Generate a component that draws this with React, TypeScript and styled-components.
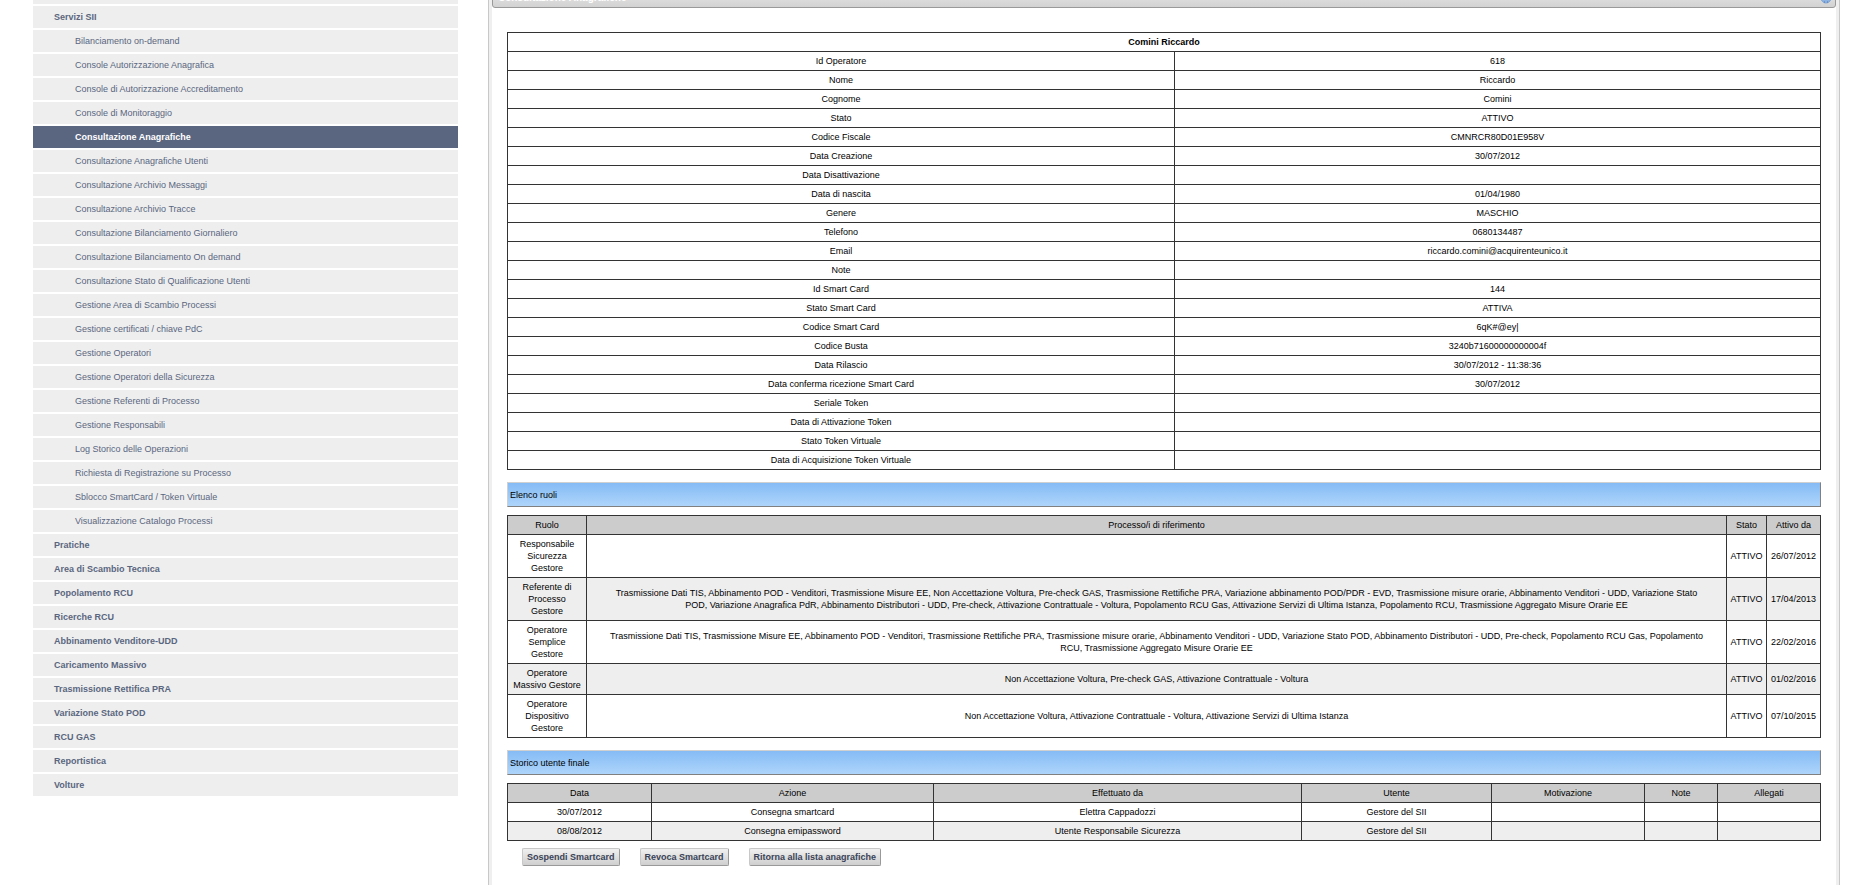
import React from "react";
import styled, { createGlobalStyle } from "styled-components";

const Global = createGlobalStyle`
  * { box-sizing: border-box; }
  body {
    margin: 0;
    background: #fff;
    color: #000;
    font: 9px/12px "Liberation Sans", Arial, sans-serif;
    overflow: hidden;
  }
`;

const Page = styled.div`
  display: flex;
  align-items: stretch;
  gap: 30px;
  min-height: 100vh;
  padding: 0 23px 0 33px;
`;

const Sidebar = styled.nav`
  flex: 0 0 425px;
`;

const Menu = styled.ul`
  display: flex;
  flex-direction: column;
  gap: 2px;
  margin: -18px 0 0;
  padding: 0;
  list-style: none;
`;

const MenuItem = styled.li`
  height: 22px;
  background: #eee;
`;

const MenuLink = styled.a<{ $level: 1 | 2; $active?: boolean }>`
  display: block;
  padding: 5px 0 5px ${(p) => (p.$level === 1 ? 21 : 42)}px;
  color: ${(p) => (p.$active ? "#fff" : "#5a667f")};
  background: ${(p) => (p.$active ? "#5a667f" : "transparent")};
  font-weight: ${(p) => (p.$level === 1 || p.$active ? "bold" : "normal")};
  text-decoration: none;
`;

const Panel = styled.main`
  flex: 1;
  min-width: 0;
  border: solid #c8c8c8;
  border-width: 0 1px;
  background: #efefef;
  padding: 0 3px;
`;

const PanelBody = styled.div`
  display: flow-root;
  min-height: 100vh;
  background: #fff;
`;

const TitleBar = styled.header`
  display: flex;
  align-items: flex-end;
  justify-content: space-between;
  height: 26px;
  margin-top: -18px;
  padding: 0 3px 3px 5px;
  border: 1px solid #999;
  border-radius: 3px;
  background: linear-gradient(#f0f0f0, #d2d2d2);
`;

const Title = styled.h1`
  margin: 0;
  color: #fff;
  font-size: 10px;
  line-height: 12px;
`;

const Content = styled.div`
  padding: 24px 15px 0;
`;

const DataTable = styled.table`
  width: 100%;
  table-layout: fixed;
  border-collapse: collapse;
  text-align: center;
`;

const HeadRow = styled.tr`
  background: #ccc;
`;

const BodyRow = styled.tr<{ $shaded?: boolean }>`
  background: ${(p) => (p.$shaded ? "#eee" : "#fff")};
`;

const Cell = styled.td<{ $inset?: number; $strong?: boolean }>`
  height: 19px;
  padding: 3px ${(p) => p.$inset ?? 3}px;
  border: 1px solid #333;
  font-weight: ${(p) => (p.$strong ? "bold" : "normal")};
`;

const SectionBar = styled.h2`
  margin: 12px 0 8px;
  padding: 6px 2px 5px;
  border: 1px solid;
  border-color: #d0d0d0 #808080 #808080 #d0d0d0;
  background: linear-gradient(#85bbf5, #aed5fb);
  font-size: 9px;
  font-weight: normal;
  line-height: 12px;
`;

const Actions = styled.div`
  display: flex;
  gap: 20px;
  padding: 7px 15px;
`;

const ActionButton = styled.button`
  height: 18px;
  padding: 0 4px;
  border: 1px solid;
  border-color: #c8c8c8 #999 #999 #c8c8c8;
  border-radius: 2px;
  background: linear-gradient(#f0f0f0, #cfcfcf);
  color: #3a4358;
  font: bold 9px/12px "Liberation Sans", Arial, sans-serif;
`;

const services = [
  "Bilanciamento on-demand", "Console Autorizzazione Anagrafica", "Console di Autorizzazione Accreditamento",
  "Console di Monitoraggio", "Consultazione Anagrafiche", "Consultazione Anagrafiche Utenti",
  "Consultazione Archivio Messaggi", "Consultazione Archivio Tracce", "Consultazione Bilanciamento Giornaliero",
  "Consultazione Bilanciamento On demand", "Consultazione Stato di Qualificazione Utenti",
  "Gestione Area di Scambio Processi", "Gestione certificati / chiave PdC", "Gestione Operatori",
  "Gestione Operatori della Sicurezza", "Gestione Referenti di Processo", "Gestione Responsabili",
  "Log Storico delle Operazioni", "Richiesta di Registrazione su Processo", "Sblocco SmartCard / Token Virtuale",
  "Visualizzazione Catalogo Processi",
];

const areas = [
  "Pratiche", "Area di Scambio Tecnica", "Popolamento RCU", "Ricerche RCU", "Abbinamento Venditore-UDD",
  "Caricamento Massivo", "Trasmissione Rettifica PRA", "Variazione Stato POD", "RCU GAS", "Reportistica", "Volture",
];

const details: [string, string][] = [
  ["Id Operatore", "618"], ["Nome", "Riccardo"], ["Cognome", "Comini"], ["Stato", "ATTIVO"],
  ["Codice Fiscale", "CMNRCR80D01E958V"], ["Data Creazione", "30/07/2012"], ["Data Disattivazione", ""],
  ["Data di nascita", "01/04/1980"], ["Genere", "MASCHIO"], ["Telefono", "0680134487"],
  ["Email", "riccardo.comini@acquirenteunico.it"], ["Note", ""], ["Id Smart Card", "144"],
  ["Stato Smart Card", "ATTIVA"], ["Codice Smart Card", "6qK#@ey|"], ["Codice Busta", "3240b71600000000004f"],
  ["Data Rilascio", "30/07/2012 - 11:38:36"], ["Data conferma ricezione Smart Card", "30/07/2012"],
  ["Seriale Token", ""], ["Data di Attivazione Token", ""], ["Stato Token Virtuale", ""],
  ["Data di Acquisizione Token Virtuale", ""],
];

const roles = [
  ["Responsabile Sicurezza Gestore", "", "ATTIVO", "26/07/2012"],
  ["Referente di Processo Gestore", "Trasmissione Dati TIS, Abbinamento POD - Venditori, Trasmissione Misure EE, Non Accettazione Voltura, Pre-check GAS, Trasmissione Rettifiche PRA, Variazione abbinamento POD/PDR - EVD, Trasmissione misure orarie, Abbinamento Venditori - UDD, Variazione Stato POD, Variazione Anagrafica PdR, Abbinamento Distributori - UDD, Pre-check, Attivazione Contrattuale - Voltura, Popolamento RCU Gas, Attivazione Servizi di Ultima Istanza, Popolamento RCU, Trasmissione Aggregato Misure Orarie EE", "ATTIVO", "17/04/2013"],
  ["Operatore Semplice Gestore", "Trasmissione Dati TIS, Trasmissione Misure EE, Abbinamento POD - Venditori, Trasmissione Rettifiche PRA, Trasmissione misure orarie, Abbinamento Venditori - UDD, Variazione Stato POD, Abbinamento Distributori - UDD, Pre-check, Popolamento RCU Gas, Popolamento RCU, Trasmissione Aggregato Misure Orarie EE", "ATTIVO", "22/02/2016"],
  ["Operatore Massivo Gestore", "Non Accettazione Voltura, Pre-check GAS, Attivazione Contrattuale - Voltura", "ATTIVO", "01/02/2016"],
  ["Operatore Dispositivo Gestore", "Non Accettazione Voltura, Attivazione Contrattuale - Voltura, Attivazione Servizi di Ultima Istanza", "ATTIVO", "07/10/2015"],
];

const history = [
  ["30/07/2012", "Consegna smartcard", "Elettra Cappadozzi", "Gestore del SII", "", "", ""],
  ["08/08/2012", "Consegna emipassword", "Utente Responsabile Sicurezza", "Gestore del SII", "", "", ""],
];

type Column = { label: string; width: number; inset?: number };

const roleColumns: Column[] = [
  { label: "Ruolo", width: 79, inset: 4 },
  { label: "Processo/i di riferimento", width: 1140, inset: 20 },
  { label: "Stato", width: 40 },
  { label: "Attivo da", width: 54 },
];

const historyColumns: Column[] = [
  { label: "Data", width: 144 },
  { label: "Azione", width: 282 },
  { label: "Effettuato da", width: 368 },
  { label: "Utente", width: 190 },
  { label: "Motivazione", width: 153 },
  { label: "Note", width: 73 },
  { label: "Allegati", width: 103 },
];

function Grid({ columns, rows }: { columns: Column[]; rows: string[][] }) {
  return (
    <DataTable>
      <colgroup>{columns.map((c) => <col key={c.label} width={c.width} />)}</colgroup>
      <thead>
        <HeadRow>{columns.map((c) => <Cell as="th" key={c.label} scope="col">{c.label}</Cell>)}</HeadRow>
      </thead>
      <tbody>
        {rows.map((row, r) => (
          <BodyRow key={r} $shaded={r % 2 === 1}>
            {row.map((text, c) => <Cell key={c} $inset={columns[c].inset}>{text}</Cell>)}
          </BodyRow>
        ))}
      </tbody>
    </DataTable>
  );
}

export default function App() {
  return (
    <>
      <Global />
      <Page>
        <Sidebar>
          <Menu>
            <MenuItem />
            <MenuItem><MenuLink href="#" $level={1}>Servizi SII</MenuLink></MenuItem>
            {services.map((s) => (
              <MenuItem key={s}>
                <MenuLink href="#" $level={2} $active={s === "Consultazione Anagrafiche"}>{s}</MenuLink>
              </MenuItem>
            ))}
            {areas.map((a) => (
              <MenuItem key={a}><MenuLink href="#" $level={1}>{a}</MenuLink></MenuItem>
            ))}
          </Menu>
        </Sidebar>
        <Panel>
          <PanelBody>
            <TitleBar>
              <Title>Consultazione Anagrafiche</Title>
              <svg width="12" height="12" viewBox="0 0 12 12" aria-hidden="true">
                <circle cx="6" cy="6" r="5" fill="#8db3e2" stroke="#7fa3d4" />
                <path d="M3 8l3-3 3 3M4 10h1M7 10h1" fill="none" stroke="#4a78b8" />
              </svg>
            </TitleBar>
            <Content>
              <DataTable>
                <colgroup><col width={667} /><col width={646} /></colgroup>
                <thead><tr><Cell as="th" $strong colSpan={2}>Comini Riccardo</Cell></tr></thead>
                <tbody>
                  {details.map(([label, value]) => (
                    <tr key={label}><Cell as="th" scope="row">{label}</Cell><Cell>{value}</Cell></tr>
                  ))}
                </tbody>
              </DataTable>
              <SectionBar>Elenco ruoli</SectionBar>
              <Grid columns={roleColumns} rows={roles} />
              <SectionBar>Storico utente finale</SectionBar>
              <Grid columns={historyColumns} rows={history} />
              <Actions>
                <ActionButton type="button">Sospendi Smartcard</ActionButton>
                <ActionButton type="button">Revoca Smartcard</ActionButton>
                <ActionButton type="button">Ritorna alla lista anagrafiche</ActionButton>
              </Actions>
            </Content>
          </PanelBody>
        </Panel>
      </Page>
    </>
  );
}
